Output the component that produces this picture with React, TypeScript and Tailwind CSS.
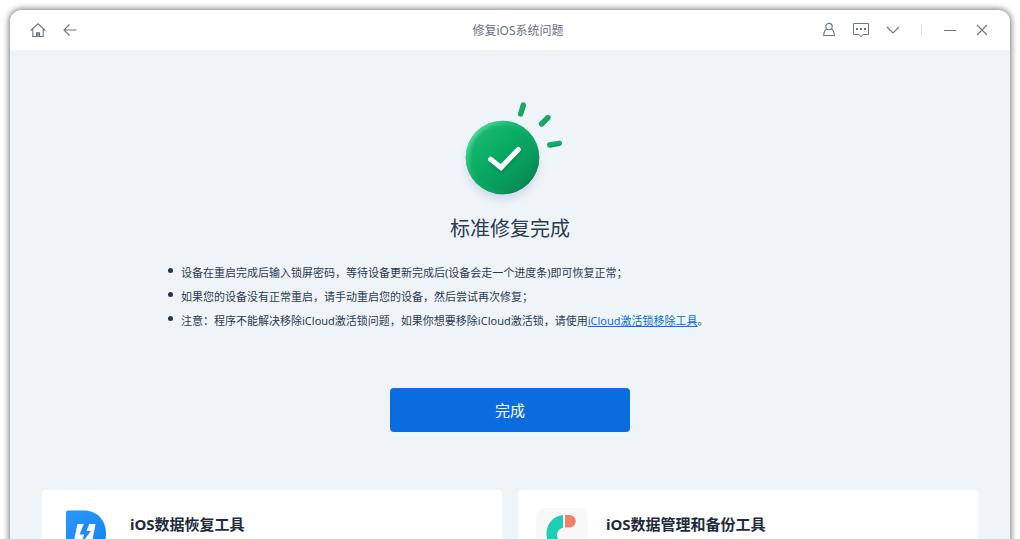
import React from "react";

type IconButtonProps = {
  label: string;
  className?: string;
  children: React.ReactNode;
};

function IconButton({ label, className = "", children }: IconButtonProps) {
  return (
    <button
      type="button"
      aria-label={label}
      className={`flex h-5 items-center justify-center text-[#6b7685] ${className}`}
    >
      {children}
    </button>
  );
}

function TitleBar() {
  return (
    <header className="grid h-10 grid-cols-3 items-center bg-white px-5">
      <div className="flex items-center gap-4">
        <IconButton label="主页" className="w-4">
          <svg width="16" height="16" viewBox="0 0 16 16" fill="none" stroke="currentColor" strokeWidth="1.1">
            <path d="M0.7 8.5 8 1.8l7.3 6.7M2.8 7v7.5h10.4V7" />
            <path d="M6.5 14.5v-3.7h3v3.7" fill="#8c95a3" />
          </svg>
        </IconButton>
        <IconButton label="返回" className="w-4">
          <svg width="16" height="16" viewBox="0 0 16 16" fill="none" stroke="currentColor" strokeWidth="1.1">
            <path d="M14.5 8H2M7.5 2.5 2 8l5.5 5.5" />
          </svg>
        </IconButton>
      </div>
      <h1 className="pt-0.5 pl-4 text-center text-xs text-[#667181]">修复iOS系统问题</h1>
      <div className="flex items-center justify-end">
        <IconButton label="账户" className="mr-4 w-4">
          <svg width="16" height="16" viewBox="0 0 16 16" fill="none" stroke="currentColor" strokeWidth="1.1">
            <circle cx="8" cy="4.6" r="3.2" />
            <path d="M5.7 6.9C3.6 8 2.8 10.4 2.6 13.5h10.8c-.2-3.1-1-5.5-3.1-6.6" />
          </svg>
        </IconButton>
        <IconButton label="反馈" className="mr-4 w-4">
          <svg className="shrink-0" width="18" height="16" viewBox="0 0 18 16" fill="none" stroke="currentColor" strokeWidth="1">
            <path d="M1.5 1.500h15v11h-5.300L9 14.600l-2.200-2.100H1.500z" />
            <path d="M4 6h2v2H4zM8 6h2v2H8zM12 6h2v2h-2z" fill="currentColor" stroke="none" />
          </svg>
        </IconButton>
        <IconButton label="菜单" className="w-4">
          <svg width="16" height="16" viewBox="0 0 16 16" fill="none" stroke="currentColor" strokeWidth="1.1">
            <path d="M2 5l6 6 6-6" />
          </svg>
        </IconButton>
        <span className="mx-5 h-3 w-px bg-[#dcdfe4]" />
        <IconButton label="最小化" className="mr-4 w-4">
          <svg width="16" height="16" viewBox="0 0 16 16" fill="none" stroke="currentColor" strokeWidth="1">
            <path d="M2 8.500h12" />
          </svg>
        </IconButton>
        <IconButton label="关闭" className="w-4">
          <svg width="16" height="16" viewBox="0 0 16 16" fill="none" stroke="currentColor" strokeWidth="1.1">
            <path d="M3 3l10 10M13 3L3 13" />
          </svg>
        </IconButton>
      </div>
    </header>
  );
}

function SuccessMark() {
  return (
    <svg width="120" height="112" viewBox="0 0 120 112" fill="none" aria-hidden="true">
      <defs>
        <linearGradient id="disc" x1="0.15" y1="0.1" x2="0.85" y2="0.9">
          <stop offset="0" stopColor="#1fb871" />
          <stop offset="0.35" stopColor="#0aae65" />
          <stop offset="0.7" stopColor="#089d5d" />
          <stop offset="1" stopColor="#068a55" />
        </linearGradient>
        <linearGradient id="rim" x1="0.05" y1="0.1" x2="0.95" y2="0.9">
          <stop offset="0" stopColor="#5fe0a4" />
          <stop offset="0.45" stopColor="#1fb873" stopOpacity="0.3" />
          <stop offset="1" stopColor="#047a4a" />
        </linearGradient>
        <filter id="soft" x="-20%" y="-20%" width="140%" height="140%">
          <feGaussianBlur stdDeviation="1.8" />
        </filter>
        <filter id="shade" x="-40%" y="-40%" width="180%" height="180%">
          <feGaussianBlur stdDeviation="5" />
        </filter>
        <clipPath id="discClip">
          <circle cx="52.5" cy="61.5" r="36.8" />
        </clipPath>
      </defs>
      <circle cx="52.500" cy="68" r="35" fill="#93a6d4" opacity="0.4" filter="url(#shade)" />
      <circle cx="52.5" cy="61.5" r="36.8" fill="url(#disc)" />
      <g clipPath="url(#discClip)">
        <circle cx="52.5" cy="61.5" r="35.5" stroke="url(#rim)" strokeWidth="5" filter="url(#soft)" />
      </g>
      <path d="M41.5 66l10 8.5L69 55" stroke="#067a4b" strokeWidth="5" opacity="0.5" filter="url(#soft)" />
      <path d="M40.600 63.200l10.400 8.300L68.300 53.500" stroke="#fff" strokeWidth="5" strokeLinecap="round" />
      <g stroke="#16aa69" strokeWidth="5.4" strokeLinecap="round">
        <path d="M73.300 9l-2.700 9M98 21.500l-6.500 6.500M109.300 47.300l-9.500 1.700" />
      </g>
      <g stroke="#0b8a53" strokeWidth="1" strokeLinecap="round" opacity="0.6">
        <path d="M75.200 10l-2.500 8M99.500 23l-6.300 6.200M109.300 49l-8.800 1.600" />
      </g>
    </svg>
  );
}

function RecoveryLogo() {
  return (
    <svg width="52" height="52" viewBox="0 0 52 52" aria-hidden="true">
      <defs>
        <linearGradient id="recovery" x1="0" y1="0" x2="0.6" y2="1">
          <stop offset="0" stopColor="#2a98fa" />
          <stop offset="1" stopColor="#1784ee" />
        </linearGradient>
      </defs>
      <path d="M8 2.5H24C37 2.500 46 12 46 26S37 49 24 49H8q-2 0-2-2V4.500q0-2 2-2z" fill="url(#recovery)" />
      <path d="M17.500 16H35.500L31.500 37H13z" fill="#fff" />
      <path d="M24 15.500h5.500L26.500 23H31L21 36l3.200-9.500h-4.700z" fill="#1e8bf2" />
    </svg>
  );
}

function ManagerLogo() {
  return (
    <svg width="52" height="52" viewBox="0 0 52 52" aria-hidden="true">
      <rect width="52" height="52" rx="9" fill="#f8f8f8" />
      <path d="M27 7C17 8 10.5 16 10.5 26S18 45 29 45V34c-5 0-8-3-8-7 0-3.5 2.500-6.500 6-7.200z" fill="#1dcdb6" />
      <path d="M29 7h4.500a6 6 0 0 1 0 12.500H29z" fill="#f4806c" />
    </svg>
  );
}

function ToolCard({ title, logo }: { title: string; logo: React.ReactNode }) {
  return (
    <article className="flex min-h-24 items-start gap-[18px] rounded bg-white p-[18px]">
      {logo}
      <h3 className="pt-1 text-[15px] leading-6 font-bold text-[#1d2b3d]">{title}</h3>
    </article>
  );
}

export default function App() {
  return (
    <div className="h-screen overflow-hidden bg-white px-2.5 pt-2.5 font-['Noto_Sans','Noto_Sans_CJK_SC',sans-serif]">
      <div className="min-h-screen overflow-hidden rounded-t-xl bg-[#eff4f9] shadow-[0_0_6px_1px_rgba(0,0,0,0.55)]">
        <TitleBar />
        <main className="flex flex-col px-8 pt-[46px]">
          <div className="flex flex-col items-center">
            <SuccessMark />
            <h2 className="mt-[5px] text-xl leading-8 text-[#2b3b50]">标准修复完成</h2>
          </div>
          <ul className="mx-auto mt-4 w-full max-w-[684px] list-none text-[11px] leading-6 text-[#2b3b50]">
            {[
              <>设备在重启完成后输入锁屏密码，等待设备更新完成后(设备会走一个进度条)即可恢复正常；</>,
              <>如果您的设备没有正常重启，请手动重启您的设备，然后尝试再次修复；</>,
              <>
                注意：程序不能解决移除iCloud激活锁问题，如果你想要移除iCloud激活锁，请使用
                <a href="#icloud" className="text-[#0b6cdb] underline">iCloud激活锁移除工具</a>。
              </>,
            ].map((line, i) => (
              <li key={i} className="flex gap-2">
                <span className="mt-[7px] size-[5px] shrink-0 rounded-full bg-[#24354a]" />
                <span>{line}</span>
              </li>
            ))}
          </ul>
          <button
            type="button"
            className="mx-auto mt-[55px] h-11 w-60 rounded bg-[#0b6cdf] pt-px text-[15px] text-white"
          >
            完成
          </button>
          <section className="mt-[58px] grid grid-cols-2 gap-4">
            <ToolCard title="iOS数据恢复工具" logo={<RecoveryLogo />} />
            <ToolCard title="iOS数据管理和备份工具" logo={<ManagerLogo />} />
          </section>
        </main>
      </div>
    </div>
  );
}
